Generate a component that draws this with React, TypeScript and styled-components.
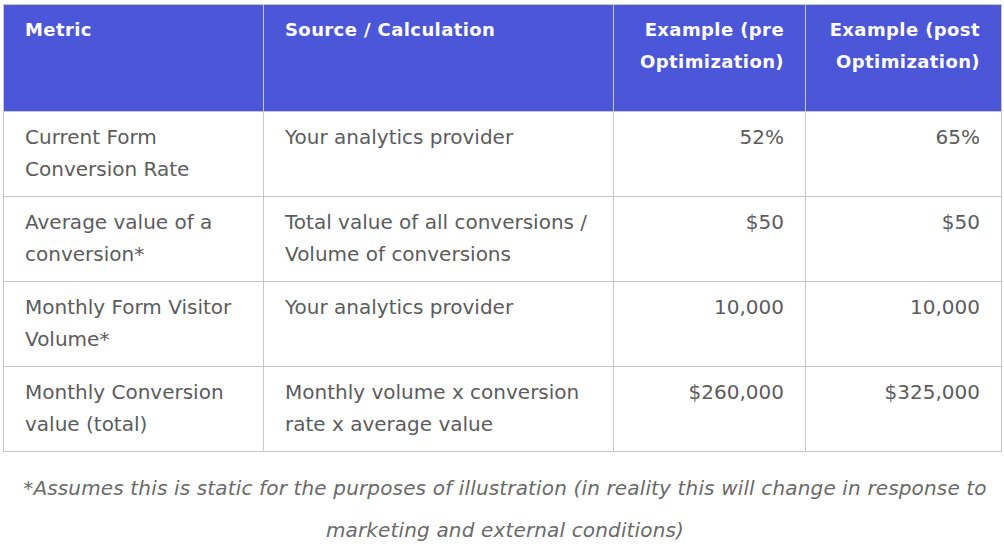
import React from "react";
import styled, { createGlobalStyle } from "styled-components";

const Global = createGlobalStyle`
  html, body { margin: 0; padding: 0; background: #ffffff; }
  body { font-family: "DejaVu Sans", "Liberation Sans", sans-serif; }
`;

const Page = styled.div`
  width: 1004px;
  padding: 4px 0 0 3px;
  box-sizing: border-box;
`;

const Table = styled.table`
  width: 998px;
  border-collapse: collapse;
  table-layout: fixed;
  font-size: 20px;
  line-height: 32px;
`;

const Col = styled.col<{ $w: number }>`
  width: ${(p) => p.$w}px;
`;

const HeadCell = styled.th<{ $align?: "left" | "right" }>`
  background: #4b56d8;
  color: #ffffff;
  font-size: 18px;
  letter-spacing: 0.4px;
  font-weight: 600;
  white-space: nowrap;
  text-align: ${(p) => p.$align ?? "left"};
  vertical-align: top;
  padding: 9px 21px 33px 21px;
  border: 1px solid #c6c6c6;
`;

const Cell = styled.td<{ $align?: "left" | "right" }>`
  color: #5c5c5c;
  font-weight: 400;
  text-align: ${(p) => p.$align ?? "left"};
  vertical-align: top;
  padding: 9px 21px 11px 21px;
  border: 1px solid #c6c6c6;
`;

const Note = styled.p`
  margin: 15px 0 0 0;
  width: 1004px;
  text-align: center;
  font-style: italic;
  color: #6a6a6a;
  font-size: 20px;
  letter-spacing: 0.15px;
  line-height: 42px;
`;

type Row = { metric: React.ReactNode; source: React.ReactNode; pre: string; post: string };

const rows: Row[] = [
  { metric: <>Current Form<br />Conversion Rate</>, source: "Your analytics provider", pre: "52%", post: "65%" },
  { metric: <>Average value of a<br />conversion*</>, source: <>Total value of all conversions /<br />Volume of conversions</>, pre: "$50", post: "$50" },
  { metric: <>Monthly Form Visitor<br />Volume*</>, source: "Your analytics provider", pre: "10,000", post: "10,000" },
  { metric: <>Monthly Conversion<br />value (total)</>, source: <>Monthly volume x conversion<br />rate x average value</>, pre: "$260,000", post: "$325,000" },
];

export default function App() {
  return (
    <>
      <Global />
      <Page>
        <Table>
          <colgroup>
            <Col $w={260} />
            <Col $w={350} />
            <Col $w={192} />
            <Col $w={196} />
          </colgroup>
          <thead>
            <tr>
              <HeadCell>Metric</HeadCell>
              <HeadCell>Source / Calculation</HeadCell>
              <HeadCell $align="right">Example (pre<br />Optimization)</HeadCell>
              <HeadCell $align="right">Example (post<br />Optimization)</HeadCell>
            </tr>
          </thead>
          <tbody>
            {rows.map((r, i) => (
              <tr key={i}>
                <Cell>{r.metric}</Cell>
                <Cell>{r.source}</Cell>
                <Cell $align="right">{r.pre}</Cell>
                <Cell $align="right">{r.post}</Cell>
              </tr>
            ))}
          </tbody>
        </Table>
        <Note>
          *Assumes this is static for the purposes of illustration (in reality this will change in response to
          <br />
          marketing and external conditions)
        </Note>
      </Page>
    </>
  );
}
